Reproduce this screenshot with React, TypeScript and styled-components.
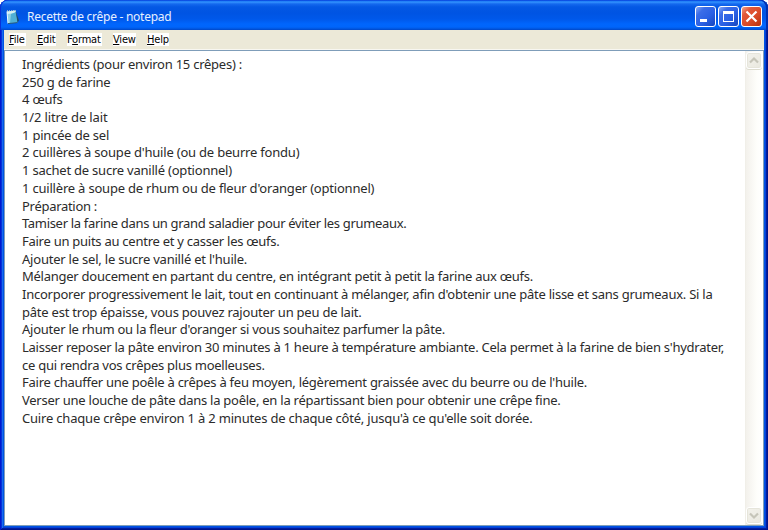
import React from 'react';
import styled, { createGlobalStyle } from 'styled-components';

const GlobalStyle = createGlobalStyle`
  *, *::before, *::after { box-sizing: border-box; }
  body { margin: 0; background: #fff; overflow: hidden; }
`;

const Window = styled.div`
  display: flex;
  flex-direction: column;
  width: 768px;
  height: 530px;
  padding: 0 4px 4px;
  border-radius: 8px 8px 0 0;
  background: #0054e3;
  box-shadow: inset 1px 0 #0019cf, inset -1px 0 #00138c, inset 0 -1px #00138c,
    inset 2px 0 #0831d9, inset -2px 0 #001ea0, inset 0 -2px #001ea0,
    inset 3px 0 #166aee, inset -3px 0 #0441d8, inset 0 -3px #0441d8;
`;

const TitleBar = styled.header`
  display: flex;
  align-items: center;
  flex: none;
  height: 30px;
  margin: 0 -4px;
  padding: 3px 6px 0 6px;
  border-radius: 8px 8px 0 0;
  background: linear-gradient(180deg, #0831d9 0, #1270f0 1px, #3593ff 2px, #1468ee 4px, #0458e4 7px,
    #0054e3 13px, #0058ea 19px, #0066fd 24px, #0065fb 27px, #0054dd 29px, #0045c4 30px);
  box-shadow: inset 1px 0 #0831d9, inset -2px 0 #0030b0;
`;

const Title = styled.h1`
  flex: 1;
  margin: 0 0 0 7px;
  color: #e6f0ff;
  font: 400 12px/20px 'Noto Sans', sans-serif;
  letter-spacing: -0.27px;
  white-space: nowrap;
`;

const Controls = styled.div`
  display: flex;
  gap: 2px;
`;

const ControlButton = styled.button<{ $danger?: boolean }>`
  display: flex;
  width: 21px;
  height: 21px;
  padding: 0;
  border: 1px solid #fff;
  border-radius: 3px;
  background: ${(p) =>
    p.$danger
      ? 'linear-gradient(135deg, #f0a58c 0%, #e2593a 25%, #da4a26 60%, #b8320e 100%)'
      : 'linear-gradient(135deg, #87a8f4 0%, #3b6de8 25%, #2a60e4 60%, #1545bd 100%)'};
`;

const MenuBar = styled.nav`
  display: flex;
  align-items: flex-start;
  flex: none;
  gap: 11px;
  height: 20px;
  padding: 3px 5px 0;
  background: #ece9d8;
  border-bottom: 1px solid #f8f7f1;
`;

const MenuItem = styled.span<{ $width: number }>`
  width: ${(p) => p.$width}px;
  height: 13px;
  background: #fff;
  color: #000;
  font: 11px/13px 'DejaVu Sans Condensed', 'DejaVu Sans', sans-serif;
  font-stretch: condensed;
  letter-spacing: -0.2px;
  white-space: nowrap;
`;

const Mnemonic = styled.span`
  text-decoration: underline;
  text-decoration-thickness: 1px;
  text-underline-offset: 1px;
`;

const Body = styled.main`
  display: flex;
  flex: 1;
  min-height: 0;
  border: 1px solid #7f9db9;
  background: #fff;
`;

const Page = styled.article`
  flex: 1;
  min-width: 0;
  padding: 4px 0 0 17px;
`;

const Line = styled.p<{ $tracking: number }>`
  margin: 0;
  height: 17.7px;
  color: #2b2b2b;
  font: 13px/18px 'Noto Sans', sans-serif;
  letter-spacing: ${(p) => p.$tracking}px;
  white-space: nowrap;
`;

const Scrollbar = styled.aside`
  display: flex;
  flex-direction: column;
  justify-content: space-between;
  align-items: center;
  width: 18px;
  padding: 1px 0;
  background: linear-gradient(90deg, #eeede5 0, #f3f1ec 1px, #fefefb 12px, #fff 18px);
`;

const ScrollButton = styled.button`
  display: flex;
  width: 16px;
  height: 17px;
  padding: 0;
  border: 1px solid #fff;
  border-radius: 3px;
  background: linear-gradient(135deg, #f3f2ec, #e9e8df);
  box-shadow: inset 0 0 0 1px #e6e5db, 0 1px #dddccf;
`;

const NotepadIcon = () => (
  <svg width="14" height="16" viewBox="0 0 14 16">
    <path d="M1 2.5 9.5 1.5 11.5 13.5 2 14.5Z" fill="#8fd0e6" />
    <path d="M1 2.5 9.5 1.5 10 4 1.3 5Z" fill="#d5f1f6" />
    <path d="M5 5 10 3 11.3 13.4 4 14Z" fill="#4fafd5" />
    <path d="M9.5 1.8 13 11.5 11.5 13.5Z" fill="#1e4d68" />
    <path d="M1 2.5 2 14.5" stroke="#e9fbff" />
    <path d="M2 14.6 11.5 13.6" stroke="#24577a" />
    <path d="M1 1.9h8.5" stroke="#e4e0bd" strokeDasharray="1 1" />
  </svg>
);

const MinimizeGlyph = () => (
  <svg width="19" height="19" viewBox="0 0 19 19">
    <path d="M4 12h7v3H4z" fill="#fff" />
  </svg>
);

const MaximizeGlyph = () => (
  <svg width="19" height="19" viewBox="0 0 19 19">
    <path d="M4 4h11v11H4zM5 7v7h9V7z" fill="#fff" fillRule="evenodd" />
  </svg>
);

const CloseGlyph = () => (
  <svg width="19" height="19" viewBox="0 0 19 19">
    <path d="m4.5 4.5 10 10m0-10-10 10" stroke="#fff" strokeWidth="2.2" />
  </svg>
);

const Chevron = ({ down }: { down?: boolean }) => (
  <svg width="14" height="15" viewBox="0 0 14 15">
    <path d={down ? 'm3 5.5 4 4 4-4' : 'm3 9.5 4-4 4 4'} fill="none" stroke="#c6c5b9" strokeWidth="2.2" />
  </svg>
);

const menus = [
  { before: '', key: 'F', after: 'ile', width: 17 },
  { before: '', key: 'E', after: 'dit', width: 19 },
  { before: 'F', key: 'o', after: 'rmat', width: 35 },
  { before: '', key: 'V', after: 'iew', width: 23 },
  { before: '', key: 'H', after: 'elp', width: 22 },
];

const recipe: [string, number][] = [
  ['Ingrédients (pour environ 15 crêpes) :', -0.25],
  ['250 g de farine', -0.21],
  ['4 œufs', -0.22],
  ['1/2 litre de lait', -0.13],
  ['1 pincée de sel', -0.2],
  ["2 cuillères à soupe d'huile (ou de beurre fondu)", -0.205],
  ['1 sachet de sucre vanillé (optionnel)', -0.22],
  ["1 cuillère à soupe de rhum ou de fleur d'oranger (optionnel)", -0.2],
  ['Préparation :', -0.29],
  ['Tamiser la farine dans un grand saladier pour éviter les grumeaux.', -0.32],
  ['Faire un puits au centre et y casser les œufs.', -0.26],
  ["Ajouter le sel, le sucre vanillé et l'huile.", -0.215],
  ['Mélanger doucement en partant du centre, en intégrant petit à petit la farine aux œufs.', -0.254],
  [
    "Incorporer progressivement le lait, tout en continuant à mélanger, afin d'obtenir une pâte lisse et sans grumeaux. Si la",
    -0.244,
  ],
  ['pâte est trop épaisse, vous pouvez rajouter un peu de lait.', -0.225],
  ["Ajouter le rhum ou la fleur d'oranger si vous souhaitez parfumer la pâte.", -0.242],
  [
    "Laisser reposer la pâte environ 30 minutes à 1 heure à température ambiante. Cela permet à la farine de bien s'hydrater,",
    -0.258,
  ],
  ['ce qui rendra vos crêpes plus moelleuses.', -0.262],
  ["Faire chauffer une poêle à crêpes à feu moyen, légèrement graissée avec du beurre ou de l'huile.", -0.256],
  ['Verser une louche de pâte dans la poêle, en la répartissant bien pour obtenir une crêpe fine.', -0.253],
  ["Cuire chaque crêpe environ 1 à 2 minutes de chaque côté, jusqu'à ce qu'elle soit dorée.", -0.194],
];

export default function App() {
  return (
    <>
      <GlobalStyle />
      <Window>
        <TitleBar>
          <NotepadIcon />
          <Title>Recette de crêpe - notepad</Title>
          <Controls>
            <ControlButton aria-label="Minimize">
              <MinimizeGlyph />
            </ControlButton>
            <ControlButton aria-label="Maximize">
              <MaximizeGlyph />
            </ControlButton>
            <ControlButton aria-label="Close" $danger>
              <CloseGlyph />
            </ControlButton>
          </Controls>
        </TitleBar>
        <MenuBar>
          {menus.map((m) => (
            <MenuItem key={m.key} $width={m.width}>
              {m.before}
              <Mnemonic>{m.key}</Mnemonic>
              {m.after}
            </MenuItem>
          ))}
        </MenuBar>
        <Body>
          <Page>
            {recipe.map(([text, tracking]) => (
              <Line key={text} $tracking={tracking}>
                {text}
              </Line>
            ))}
          </Page>
          <Scrollbar>
            <ScrollButton aria-label="Scroll up">
              <Chevron />
            </ScrollButton>
            <ScrollButton aria-label="Scroll down">
              <Chevron down />
            </ScrollButton>
          </Scrollbar>
        </Body>
      </Window>
    </>
  );
}
